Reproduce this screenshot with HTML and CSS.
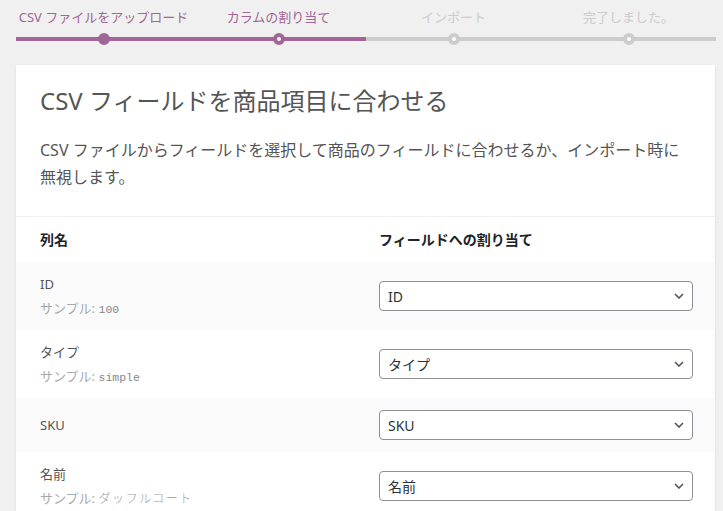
FILE: index.html
```html
<!DOCTYPE html>
<html lang="ja">
<head>
<meta charset="utf-8">
<title>商品のインポート</title>
<link rel="stylesheet" href="styles.css">
</head>
<body>
<div class="wrap">
  <ol class="steps">
    <li class="done">CSV ファイルをアップロード</li>
    <li class="active">カラムの割り当て</li>
    <li>インポート</li>
    <li>完了しました。</li>
  </ol>
  <section class="card">
    <header class="card-head">
      <h2>CSV フィールドを商品項目に合わせる</h2>
      <p>CSV ファイルからフィールドを選択して商品のフィールドに合わせるか、インポート時に無視します。</p>
    </header>
    <table class="map">
      <thead>
        <tr><th class="col-name">列名</th><th>フィールドへの割り当て</th></tr>
      </thead>
      <tbody>
        <tr>
          <td><span class="name">ID</span><span class="sample">サンプル: <code>100</code></span></td>
          <td><div class="select"><span>ID</span><svg class="chev" width="10" height="6" viewBox="0 0 10 6"><path d="M1 1l4 4 4-4" fill="none" stroke="#50575e" stroke-width="1.6"/></svg></div></td>
        </tr>
        <tr>
          <td><span class="name">タイプ</span><span class="sample">サンプル: <code>simple</code></span></td>
          <td><div class="select"><span>タイプ</span><svg class="chev" width="10" height="6" viewBox="0 0 10 6"><path d="M1 1l4 4 4-4" fill="none" stroke="#50575e" stroke-width="1.6"/></svg></div></td>
        </tr>
        <tr>
          <td><span class="name">SKU</span></td>
          <td><div class="select"><span>SKU</span><svg class="chev" width="10" height="6" viewBox="0 0 10 6"><path d="M1 1l4 4 4-4" fill="none" stroke="#50575e" stroke-width="1.6"/></svg></div></td>
        </tr>
        <tr>
          <td><span class="name">名前</span><span class="sample">サンプル: <code class="jp">ダッフルコート</code></span></td>
          <td><div class="select"><span>名前</span><svg class="chev" width="10" height="6" viewBox="0 0 10 6"><path d="M1 1l4 4 4-4" fill="none" stroke="#50575e" stroke-width="1.6"/></svg></div></td>
        </tr>
      </tbody>
    </table>
  </section>
</div>
</body>
</html>
```
FILE: styles.css
```css
html, body {
  margin: 0;
  padding: 0;
  background: #f0f0f0;
}

body {
  font-family: "Noto Sans", "Noto Sans CJK JP", sans-serif;
  font-size: 13px;
  color: #555;
}

.wrap {
  padding: 8px 8px 0 16px;
}

.steps {
  display: flex;
  list-style: none;
  margin: 0 -1px 0 0;
  padding: 0 0 24px;
  color: #ccc;
}

.steps li {
  flex: 1 1 0;
  position: relative;
  text-align: center;
  line-height: 18px;
  padding-bottom: 11px;
  border-bottom: 4px solid #ccc;
  font-size: 13px;
}

.steps li::before {
  content: "";
  position: absolute;
  left: 50%;
  bottom: -8px;
  margin-left: -6px;
  width: 4px;
  height: 4px;
  border: 4px solid #ccc;
  border-radius: 50%;
  background: #fff;
}

.steps li.done,
.steps li.active {
  color: #a16696;
  border-bottom-color: #a16696;
}

.steps li.done::before {
  border-color: #a16696;
  background: #a16696;
}

.steps li.active::before {
  border-color: #a16696;
  background: #fff;
}

.card {
  background: #fff;
  box-shadow: 0 1px 3px rgba(0, 0, 0, 0.08);
  overflow: hidden;
}

.card-head {
  padding: 24px 24px 1px;
  border-bottom: 1px solid #eee;
}

.card-head h2 {
  margin: 0 0 24px;
  font-size: 24px;
  line-height: 24px;
  font-weight: normal;
  color: #555;
}

.card-head p {
  margin: 0 0 24px;
  font-size: 16px;
  line-height: 27px;
  color: #555;
}

.map {
  width: 100%;
  border-collapse: collapse;
  table-layout: fixed;
}

.map th,
.map td {
  text-align: left;
  vertical-align: middle;
  padding: 12px 24px;
}

.map th {
  font-size: 14px;
  line-height: 21px;
  font-weight: bold;
  color: #1d2327;
}

.map .col-name {
  width: 291px;
}

.map tbody tr:nth-child(odd) {
  background: #fafafa;
}

.name {
  display: block;
  height: 20px;
  line-height: 20px;
  font-size: 13px;
  color: #555;
}

.sample {
  display: block;
  height: 20px;
  margin-top: 4px;
  line-height: 20px;
  font-size: 13px;
  color: #a7aaad;
}

.sample code {
  font-family: "Liberation Mono", "DejaVu Sans Mono", monospace;
  font-size: 11.5px;
  line-height: 1;
  color: #888;
}

.sample code.jp {
  font-family: "Noto Sans CJK JP", sans-serif;
  font-size: 12px;
  font-weight: 300;
  letter-spacing: 1.5px;
  color: #999;
}

.select {
  display: flex;
  align-items: center;
  justify-content: space-between;
  height: 30px;
  box-sizing: border-box;
  border: 1px solid #8c8f94;
  border-radius: 4px;
  background: #fff;
  padding: 0 8px 0 8px;
  font-size: 14px;
  color: #2c3338;
  margin-right: -2px;
}

.chev {
  display: block;
}
```
